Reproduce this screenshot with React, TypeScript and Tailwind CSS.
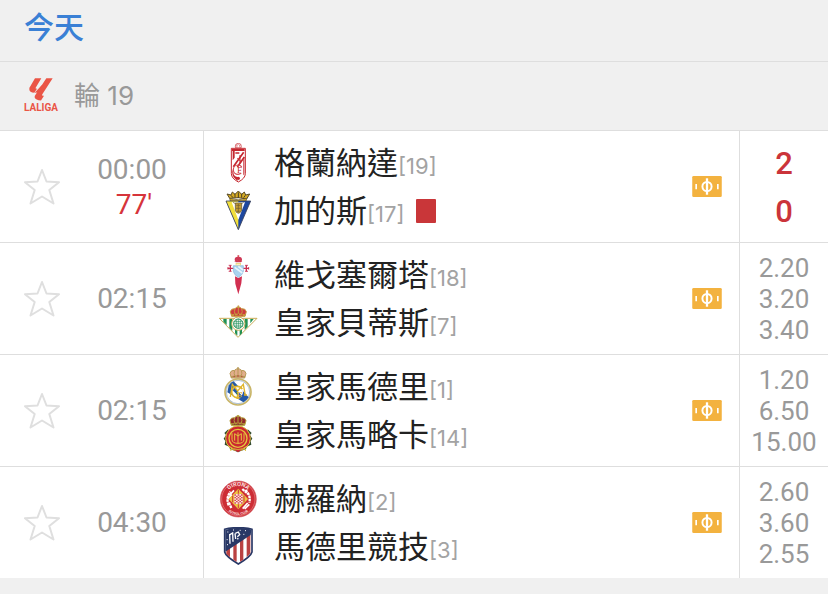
import { useState, type ReactNode } from 'react';

interface Team {
    name: string;
    rank: number;
    crest: ReactNode;
    redCard?: boolean;
}

interface Match {
    id: string;
    time: string;
    minute?: string;
    home: Team;
    away: Team;
    score?: [number, number];
    odds?: string[];
}

function Crest({ children }: { children: ReactNode }) {
    return (
        <svg viewBox="0 0 120 120" className="size-10 shrink-0" aria-hidden="true">
            {children}
        </svg>
    );
}

// Small crown shared by the royal clubs
function Crown({ fill, gold }: { fill: string; gold: string }) {
    return (
        <g>
            <path d="M40 33 L36 19 Q38 9 50 10 Q54 5 60 5 Q66 5 70 10 Q82 9 84 19 L80 33 Z" fill={fill} stroke={gold} strokeWidth="3" />
            <path d="M60 6 V27 M50 11 Q46 18 51 28 M70 11 Q74 18 69 28" fill="none" stroke={gold} strokeWidth="3" />
            <path d="M39 30 Q60 24 81 30" fill="none" stroke={gold} strokeWidth="5" />
            <path d="M60 0 V8 M57 3 H63" stroke={gold} strokeWidth="2.5" />
            <path d="M47 29 H50 M58 27 H62 M70 29 H73" stroke="#b82138" strokeWidth="3" />
        </g>
    );
}

function GranadaCrest() {
    return (
        <Crest>
            <circle cx="61" cy="10" r="9" fill="#fff" stroke="#cf4a50" strokeWidth="2.5" />
            <path d="M61 4 L66 8 L64 14 H58 L56 8 Z M54 4 L57 8 M68 4 L65 8 M52 13 L58 14 M70 13 L64 14" fill="none" stroke="#d8666b" strokeWidth="2" />
            <path d="M40 16 H82 V92 Q82 106 61 117 Q40 106 40 92 Z" fill="#fff" stroke="#c5262e" strokeWidth="3" />
            <path d="M42 18 H80 V24 H42 Z M44 24 H50 V44 L44 52 Z" fill="#c5262e" />
            <path d="M52 30 H64 M77 28 L46 71 M79 42 L58 72" stroke="#c5262e" strokeWidth="5" />
            <path d="M66 36 V62 M58 46 L70 56" stroke="#c5262e" strokeWidth="3" />
            <path d="M79 44 V94 L76 97 V51 Z M43 78 L48 96 Q53 103 61 102 Q55 106 61 114 Q44 104 43 92 Z" fill="#c5262e" />
            <circle cx="60" cy="80" r="14" fill="none" stroke="#d34b50" strokeWidth="3.5" strokeDasharray="66 22" strokeDashoffset="-11" />
            <text x="57" y="90" fontSize="27" fontFamily="Liberation Serif, serif" fill="#c5262e">F</text>
            <circle cx="61" cy="106" r="5" fill="#c5262e" />
        </Crest>
    );
}

function CadizCrest() {
    return (
        <Crest>
            <path d="M35 22 L27 9 L39 12 L43 3 L51 10 L61 0 L71 10 L79 3 L83 12 L95 9 L86 24 Q61 17 35 22 Z" fill="#d6ac25" stroke="#574a27" strokeWidth="3" />
            <path d="M39 13 L45 20 M51 8 V20 M61 4 V21 M71 8 V20 M82 13 L77 20" stroke="#4a3e25" strokeWidth="3" />
            <path d="M35 22 Q61 31 86 22 L84 31 H37 Z" fill="#d6ac25" stroke="#574a27" strokeWidth="2" />
            <path d="M24 30 H98 L61 116 Z" fill="#1d479f" />
            <path d="M24 30 H61 V116 Z" fill="#f2df3b" />
            <path d="M41 34 H81 L61 86 Z" fill="#fff" />
            <path d="M24 30 H98 L61 116 Z" fill="none" stroke="#39415d" strokeWidth="2.5" />
            <path d="M52 36 H71 V58 Q69 65 61 67 Q53 65 52 58 Z" fill="#c59c31" stroke="#51472d" strokeWidth="2" />
            <path d="M52 38 L45 34 M71 38 L77 34 M55 43 H67 M54 52 H68 M57 61 H65 M61 39 V64" stroke="#6b5a30" strokeWidth="2" />
        </Crest>
    );
}

function CeltaCrest() {
    return (
        <Crest>
            <path d="M52 55 L71 55 L69 86 L61 118 L53 87 Z" fill="#fff" />
            <path d="M51 64 L61 69 L72 64 L70 85 L61 118 L52 86 Z" fill="#d12f50" />
            <path d="M29 40 H47 M75 40 H93 M37 31 V49 M85 31 V49" stroke="#c92e50" strokeWidth="4" />
            <path d="M32 31 H41 M32 49 H41 M81 31 H90 M81 49 H90 M30 36 V44 M92 36 V44" stroke="#c92e50" strokeWidth="2.5" />
            <path d="M46 32 H76 V49 Q74 60 61 67 Q48 60 46 49 Z" fill="#a9d3ef" stroke="#86b6dc" strokeWidth="2" />
            <path d="M50 37 L73 54 M61 34 L75 45" stroke="#e9f5fc" strokeWidth="5" />
            <path d="M50 15 Q49 5 61 5 Q73 5 72 15 L69 22 H53 Z" fill="#ce3655" />
            <path d="M61 1 V9 M58 3 H64 M51 20 L56 13 L61 20 L66 13 L71 20" fill="none" stroke="#d5434f" strokeWidth="3" />
            <path d="M53 24 H69 V31 H53 Z" fill="#e6d477" />
            <path d="M55 28 H67" stroke="#fff6cd" strokeWidth="3" />
        </Crest>
    );
}

function BetisCrest() {
    return (
        <Crest>
            <path d="M4 46 H117 L60 103 Z" fill="#fff" stroke="#c9ac57" strokeWidth="3" strokeLinejoin="round" />
            <path d="M16 48 H26 V66 L16 56 Z M34 48 H43 V83 L34 74 Z M51 48 H58 V98 L51 91 Z M65 48 H72 V91 L65 98 Z M80 48 H89 V71 L80 80 Z M97 48 H107 L97 61 Z" fill="#219154" />
            <circle cx="61" cy="62" r="20" fill="#fff" stroke="#c4aa58" strokeWidth="3" />
            <circle cx="61" cy="62" r="14" fill="none" stroke="#239259" strokeWidth="3" />
            <path d="M55 48 V75 M61 47 V77 M67 48 V75 M47 56 H75 M46 62 H76 M47 69 H75" stroke="#239259" strokeWidth="2" />
            <g transform="translate(1 7)">
                <Crown fill="#ce3a3f" gold="#c79b3e" />
            </g>
        </Crest>
    );
}

function RealMadridCrest() {
    return (
        <Crest>
            <circle cx="60" cy="75" r="39" fill="#fff" stroke="#c9b568" strokeWidth="5" />
            <circle cx="60" cy="75" r="35" fill="none" stroke="#5980a8" strokeWidth="1.5" />
            <path d="M32 56 Q38 46 47 43 L92 91 Q86 101 76 106 L28 76 Z" fill="#2459a6" />
            <circle cx="58" cy="75" r="17" fill="#fff" stroke="#dfb42c" strokeWidth="5" strokeDasharray="83 24" strokeDashoffset="-12" />
            <path d="M50 62 L72 86 L66 92 L44 70 Z" fill="#2459a6" />
            <path d="M37 90 L43 52 L59 72 L76 52 L82 86 M78 84 H87" fill="none" stroke="#dfb42c" strokeWidth="4" />
            <text x="54" y="96" fontSize="32" fontWeight="700" fontFamily="Liberation Serif, serif" fill="#dfb42c">F</text>
            <Crown fill="#e2ad8c" gold="#b69955" />
        </Crest>
    );
}

function MallorcaCrest() {
    return (
        <Crest>
            <path d="M29 44 L19 54 L24 60 L17 71 L22 78 L20 89 L34 95 L36 103 L50 107 L60 112 L70 107 L84 103 L86 95 L100 89 L98 78 L103 71 L96 60 L101 54 L91 44 Z" fill="#344c2e" />
            <circle cx="60" cy="70" r="37" fill="#cb2831" stroke="#d9bd3c" strokeWidth="3" />
            <circle cx="60" cy="70" r="27" fill="none" stroke="#e4c63d" strokeWidth="4" />
            <path d="M42 55 V73 Q42 85 60 85 Q78 85 78 73 V55 M50 56 V77 M60 52 V85 M70 56 V77 M50 56 L60 63 L70 56" fill="none" stroke="#e4c63d" strokeWidth="3" />
            <path d="M32 93 Q60 115 88 93 M41 100 L38 108 M79 100 L83 108" fill="none" stroke="#e0c341" strokeWidth="3" />
            <path d="M49 104 H71 L60 112 Z" fill="#c92d34" />
            <g transform="translate(0 -2)">
                <Crown fill="#91282b" gold="#b5a03b" />
                <path d="M43 30 H77" stroke="#473b22" strokeWidth="2" strokeDasharray="3 3" />
            </g>
        </Crest>
    );
}

function GironaCrest() {
    return (
        <Crest>
            <circle cx="61" cy="60" r="54" fill="#cd2d35" stroke="#d5656a" strokeWidth="2" />
            <circle cx="61" cy="60" r="50" fill="none" stroke="#eea4a5" strokeWidth="1.5" />
            <defs>
                <path id="girona-top" d="M22 60 A39 39 0 0 1 100 60" />
                <path id="girona-bottom" d="M13 60 A48 48 0 0 0 109 60" />
            </defs>
            <text fontSize="17" fontWeight="700" fontFamily="Roboto, sans-serif" fill="#f8dcdc">
                <textPath href="#girona-top" startOffset="50%" textAnchor="middle">GIRONA</textPath>
            </text>
            <text fontSize="10" fontWeight="700" fontFamily="Roboto, sans-serif" fill="#f8dcdc">
                <textPath href="#girona-bottom" startOffset="50%" textAnchor="middle">FUTBOL CLUB</textPath>
            </text>
            <path d="M32 79 Q23 56 38 38 M40 87 L32 69 M82 33 Q99 48 94 71 M73 30 L90 45" fill="none" stroke="#fff" strokeWidth="7" strokeDasharray="8 2" />
            <path d="M34 49 L48 34 M74 89 L89 72 M29 60 L42 47 M80 90 L94 76" stroke="#fff" strokeWidth="5" />
            <path d="M61 29 L90 60 L61 91 L32 60 Z" fill="#edc642" />
            <path d="M44 50 V70 M78 50 V70 M61 32 V44 M61 76 V88" stroke="#ce3540" strokeWidth="3" />
            <path d="M49 45 H74 V75 H49 Z" fill="#f8e4e0" />
            <path d="M49 48 H74 M49 56 H74 M49 64 H74 M49 72 H74" stroke="#d64b54" strokeWidth="4" strokeDasharray="5 5" />
            <path d="M54 52 H74 M54 60 H74 M54 68 H74" stroke="#d64b54" strokeWidth="4" strokeDasharray="5 5" />
        </Crest>
    );
}

function AtleticoCrest() {
    return (
        <Crest>
            <path d="M20 7 Q35 2 61 2 Q87 2 102 7 V75 Q99 88 61 111 Q23 88 20 75 Z" fill="#fff" stroke="#293866" strokeWidth="5" />
            <path d="M25 60 L36 52 V91 L25 81 Z M46 42 L56 34 V104 L46 98 Z M66 28 L76 20 V98 L66 104 Z M86 14 L97 8 V79 L86 91 Z" fill="#ba4242" />
            <path d="M22 9 Q40 2 61 3 Q87 2 100 8 L98 24 L22 74 Z" fill="#293866" />
            <path d="M35 21 L36 50 M36 23 L44 18 L45 44 M51 19 L53 36 M52 19 L61 15 L65 23 L58 29 M58 34 L61 37" fill="none" stroke="#fff" strokeWidth="4" />
            <path d="M28 15 H31 M45 9 H48 M65 10 H68 M81 11 H84 M26 38 H29 M27 53 H30 M76 22 H79" stroke="#fff" strokeWidth="3" />
        </Crest>
    );
}

function LaLigaLogo() {
    return (
        <div className="flex w-8 flex-col items-center gap-px text-[#ea5546]">
            <svg viewBox="0 0 72 68" className="h-[23px] w-6" fill="currentColor" aria-hidden="true">
                <path d="M18 0 H37 L20 29 Q18 32 24 32 L16 44 Q1 43 1 33 Q0 29 4 24 Z" />
                <path d="M52 0 H71 L40 48 Q37 53 45 53 L36 67 Q20 66 17 58 Q16 54 20 49 Z" />
                <path d="M38 21 L17 44 L28 43 L44 21 Z" />
            </svg>
            <span className="font-[Roboto,sans-serif] text-[10px] leading-3 font-bold">LALIGA</span>
        </div>
    );
}

function PitchIcon() {
    return (
        <svg viewBox="0 0 90 64" className="ml-auto h-[21px] w-[30px]" role="img" aria-label="Live pitch">
            <rect width="90" height="64" rx="4" fill="#f3b23f" />
            <circle cx="45" cy="32" r="14" fill="none" stroke="#fff" strokeWidth="6" />
            <path d="M45 7 V57" stroke="#fff" strokeWidth="7" />
            <path d="M12 24 V40 M78 24 V40" stroke="#fff" strokeWidth="5" />
        </svg>
    );
}

const matches: Match[] = [
    {
        id: 'granada-cadiz',
        time: '00:00',
        minute: "77'",
        home: { name: '格蘭納達', rank: 19, crest: <GranadaCrest /> },
        away: { name: '加的斯', rank: 17, crest: <CadizCrest />, redCard: true },
        score: [2, 0],
    },
    {
        id: 'celta-betis',
        time: '02:15',
        home: { name: '維戈塞爾塔', rank: 18, crest: <CeltaCrest /> },
        away: { name: '皇家貝蒂斯', rank: 7, crest: <BetisCrest /> },
        odds: ['2.20', '3.20', '3.40'],
    },
    {
        id: 'real-mallorca',
        time: '02:15',
        home: { name: '皇家馬德里', rank: 1, crest: <RealMadridCrest /> },
        away: { name: '皇家馬略卡', rank: 14, crest: <MallorcaCrest /> },
        odds: ['1.20', '6.50', '15.00'],
    },
    {
        id: 'girona-atletico',
        time: '04:30',
        home: { name: '赫羅納', rank: 2, crest: <GironaCrest /> },
        away: { name: '馬德里競技', rank: 3, crest: <AtleticoCrest /> },
        odds: ['2.60', '3.60', '2.55'],
    },
];

function TeamLine({ team }: { team: Team }) {
    return (
        <div className="flex h-12 items-center">
            {team.crest}
            <div className="ml-4 flex items-baseline pb-[2px] whitespace-nowrap">
                <span className="text-[31px] leading-10 text-[#222]">{team.name}</span>
                <span className="font-[Inter,sans-serif] text-[22px] leading-8 text-[#a3a3a3]">[{team.rank}]</span>
            </div>
            {team.redCard && <span className="ml-3 h-6 w-5 rounded-[1px] bg-[#c93639]" role="img" aria-label="Red card" />}
        </div>
    );
}

function MatchRow({ match }: { match: Match }) {
    const [starred, setStarred] = useState(false);

    return (
        <tr className="h-28 bg-white">
            <td className="border-t border-[#dedede] p-0">
                <div className="flex items-center">
                    <button
                        type="button"
                        aria-label="Favourite"
                        aria-pressed={starred}
                        onClick={() => setStarred(!starred)}
                        className="ml-[23px] shrink-0"
                    >
                        <svg viewBox="0 0 38 38" className="size-[38px]" fill={starred ? '#f3b23f' : 'none'} stroke="#dfdfdf" strokeWidth="2" strokeLinejoin="round">
                            <path d="M19 2 L23.5 13.5 L36 14.2 L26.3 22 L30.5 35.5 L19 28.5 L7.5 35.5 L11.7 22 L2 14.2 L14.5 13.5 Z" />
                        </svg>
                    </button>
                    <div className="flex-1 text-center font-[Roboto,sans-serif] text-[28px] leading-[35px] text-[#999]">
                        <div>{match.time}</div>
                        {match.minute && <div className="pl-1 text-[#d6343b]">{match.minute}</div>}
                    </div>
                </div>
            </td>
            <td className="border-t border-l border-[#dedede] py-0 pr-[17px] pl-[14px]">
                <div className="flex items-center">
                    <div>
                        <TeamLine team={match.home} />
                        <TeamLine team={match.away} />
                    </div>
                    <PitchIcon />
                </div>
            </td>
            <td className="border-t border-l border-[#dedede] px-0 pt-[2px] pb-0 text-center font-[Roboto,sans-serif]">
                {match.score?.map((goals, i) => (
                    <div key={i} className="text-[31px] leading-[48px] font-medium text-[#cb343a]">{goals}</div>
                ))}
                {match.odds?.map((odd) => (
                    <div key={odd} className="text-[26px] leading-[31px] text-[#999]">{odd}</div>
                ))}
            </td>
        </tr>
    );
}

export default function App() {
    return (
        <main className="min-h-screen bg-[#f0f0f0] font-['Noto_Sans_CJK_TC',sans-serif]">
            <header className="border-b border-[#dedede] px-6 pt-[7px] pb-[18px]">
                <h1 className="text-[30px] leading-9 font-medium text-[#3a80d5]">今天</h1>
            </header>

            <section>
                <div className="flex h-[68px] items-center gap-[17px] pl-[25px]">
                    <LaLigaLogo />
                    <h2 className="font-[Inter,'Noto_Sans_CJK_TC',sans-serif] text-[26px] leading-8 text-[#999]">輪 19</h2>
                </div>

                <table className="w-full table-fixed border-separate border-spacing-0">
                    <colgroup>
                        <col className="w-[203px]" />
                        <col />
                        <col className="w-[89px]" />
                    </colgroup>
                    <tbody>
                        {matches.map((match) => (
                            <MatchRow key={match.id} match={match} />
                        ))}
                    </tbody>
                </table>
            </section>
        </main>
    );
}
